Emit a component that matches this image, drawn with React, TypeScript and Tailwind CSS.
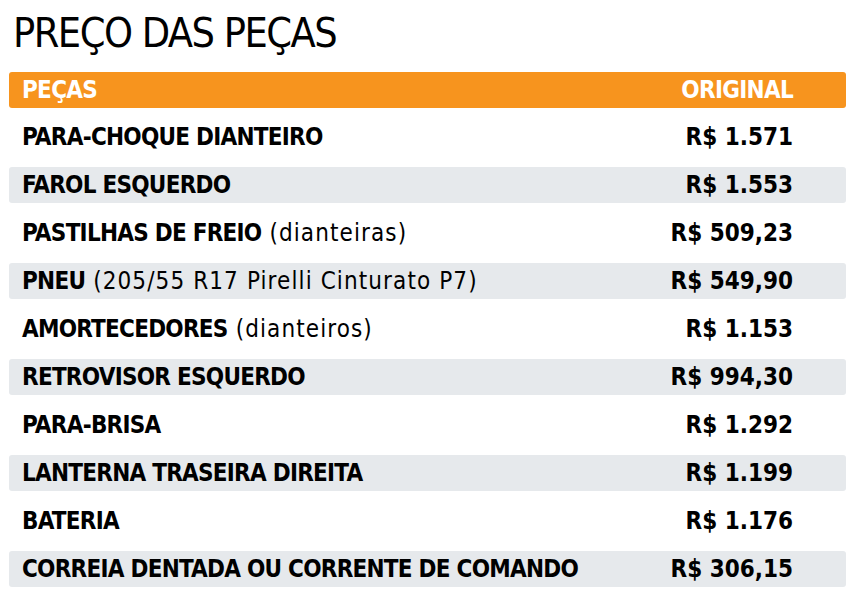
const rows: { name: string; note?: string; price: string }[] = [
  { name: 'PARA-CHOQUE DIANTEIRO', price: 'R$ 1.571' },
  { name: 'FAROL ESQUERDO', price: 'R$ 1.553' },
  { name: 'PASTILHAS DE FREIO', note: '(dianteiras)', price: 'R$ 509,23' },
  { name: 'PNEU', note: '(205/55 R17 Pirelli Cinturato P7)', price: 'R$ 549,90' },
  { name: 'AMORTECEDORES', note: '(dianteiros)', price: 'R$ 1.153' },
  { name: 'RETROVISOR ESQUERDO', price: 'R$ 994,30' },
  { name: 'PARA-BRISA', price: 'R$ 1.292' },
  { name: 'LANTERNA TRASEIRA DIREITA', price: 'R$ 1.199' },
  { name: 'BATERIA', price: 'R$ 1.176' },
  { name: 'CORREIA DENTADA OU CORRENTE DE COMANDO', price: 'R$ 306,15' },
];

export default function App() {
  return (
    <div
      className="w-[855px] h-[595px] overflow-hidden bg-white px-[9px] text-black"
      style={{ fontFamily: '"DejaVu Sans Condensed", "Liberation Sans", sans-serif' }}
    >
      <h1 className="pl-[4px] pt-[9px] h-[72px] text-[41px] leading-[48px] font-normal tracking-[-1.5px]">
        PREÇO DAS PEÇAS
      </h1>
      <div className="h-[36px] rounded-[3px] bg-[#f7941e] flex items-center justify-between pl-[13px] pr-[53px] text-white text-[24px] font-bold tracking-[-0.7px]">
        <span>PEÇAS</span>
        <span>ORIGINAL</span>
      </div>
      <div className="mt-[11px] flex flex-col gap-[12px]">
        {rows.map((r, i) => (
          <div
            key={r.name}
            className={`h-[36px] rounded-[3px] flex items-center justify-between pl-[13px] pr-[53px] text-[24px] ${
              i % 2 === 1 ? 'bg-[#e6e9ec]' : 'bg-white'
            }`}
          >
            <span className="whitespace-nowrap">
              <span className="font-bold tracking-[-0.75px]">{r.name}</span>
              {r.note && <span className="font-normal tracking-[1.1px]"> {r.note}</span>}
            </span>
            <span className="font-bold whitespace-nowrap">{r.price}</span>
          </div>
        ))}
      </div>
    </div>
  );
}
